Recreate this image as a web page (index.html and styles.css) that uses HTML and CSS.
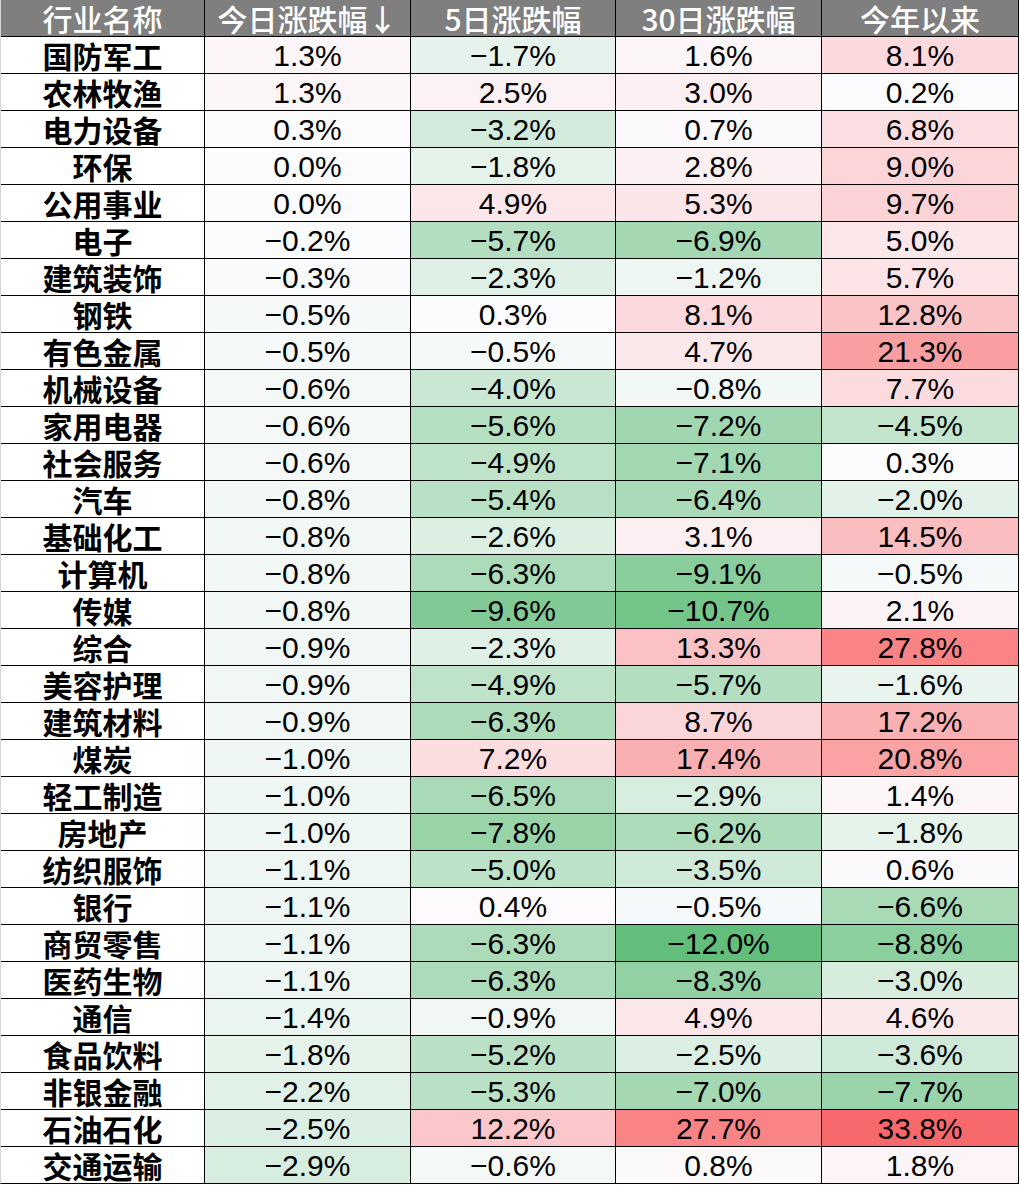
FILE: index.html
```html
<!DOCTYPE html>
<html lang="zh">
<head>
<meta charset="utf-8">
<title>行业涨跌幅</title>
<link rel="stylesheet" href="styles.css">
</head>
<body>
<div class="sheet">
  <div class="hd">行业名称</div><div class="hd">今日涨跌幅↓</div><div class="hd">5日涨跌幅</div><div class="hd">30日涨跌幅</div><div class="hd">今年以来</div>
  <div class="name">国防军工</div><div class="num">1.3%</div><div class="num">−1.7%</div><div class="num">1.6%</div><div class="num">8.1%</div>
  <div class="name">农林牧渔</div><div class="num">1.3%</div><div class="num">2.5%</div><div class="num">3.0%</div><div class="num">0.2%</div>
  <div class="name">电力设备</div><div class="num">0.3%</div><div class="num">−3.2%</div><div class="num">0.7%</div><div class="num">6.8%</div>
  <div class="name">环保</div><div class="num">0.0%</div><div class="num">−1.8%</div><div class="num">2.8%</div><div class="num">9.0%</div>
  <div class="name">公用事业</div><div class="num">0.0%</div><div class="num">4.9%</div><div class="num">5.3%</div><div class="num">9.7%</div>
  <div class="name">电子</div><div class="num">−0.2%</div><div class="num">−5.7%</div><div class="num">−6.9%</div><div class="num">5.0%</div>
  <div class="name">建筑装饰</div><div class="num">−0.3%</div><div class="num">−2.3%</div><div class="num">−1.2%</div><div class="num">5.7%</div>
  <div class="name">钢铁</div><div class="num">−0.5%</div><div class="num">0.3%</div><div class="num">8.1%</div><div class="num">12.8%</div>
  <div class="name">有色金属</div><div class="num">−0.5%</div><div class="num">−0.5%</div><div class="num">4.7%</div><div class="num">21.3%</div>
  <div class="name">机械设备</div><div class="num">−0.6%</div><div class="num">−4.0%</div><div class="num">−0.8%</div><div class="num">7.7%</div>
  <div class="name">家用电器</div><div class="num">−0.6%</div><div class="num">−5.6%</div><div class="num">−7.2%</div><div class="num">−4.5%</div>
  <div class="name">社会服务</div><div class="num">−0.6%</div><div class="num">−4.9%</div><div class="num">−7.1%</div><div class="num">0.3%</div>
  <div class="name">汽车</div><div class="num">−0.8%</div><div class="num">−5.4%</div><div class="num">−6.4%</div><div class="num">−2.0%</div>
  <div class="name">基础化工</div><div class="num">−0.8%</div><div class="num">−2.6%</div><div class="num">3.1%</div><div class="num">14.5%</div>
  <div class="name">计算机</div><div class="num">−0.8%</div><div class="num">−6.3%</div><div class="num">−9.1%</div><div class="num">−0.5%</div>
  <div class="name">传媒</div><div class="num">−0.8%</div><div class="num">−9.6%</div><div class="num">−10.7%</div><div class="num">2.1%</div>
  <div class="name">综合</div><div class="num">−0.9%</div><div class="num">−2.3%</div><div class="num">13.3%</div><div class="num">27.8%</div>
  <div class="name">美容护理</div><div class="num">−0.9%</div><div class="num">−4.9%</div><div class="num">−5.7%</div><div class="num">−1.6%</div>
  <div class="name">建筑材料</div><div class="num">−0.9%</div><div class="num">−6.3%</div><div class="num">8.7%</div><div class="num">17.2%</div>
  <div class="name">煤炭</div><div class="num">−1.0%</div><div class="num">7.2%</div><div class="num">17.4%</div><div class="num">20.8%</div>
  <div class="name">轻工制造</div><div class="num">−1.0%</div><div class="num">−6.5%</div><div class="num">−2.9%</div><div class="num">1.4%</div>
  <div class="name">房地产</div><div class="num">−1.0%</div><div class="num">−7.8%</div><div class="num">−6.2%</div><div class="num">−1.8%</div>
  <div class="name">纺织服饰</div><div class="num">−1.1%</div><div class="num">−5.0%</div><div class="num">−3.5%</div><div class="num">0.6%</div>
  <div class="name">银行</div><div class="num">−1.1%</div><div class="num">0.4%</div><div class="num">−0.5%</div><div class="num">−6.6%</div>
  <div class="name">商贸零售</div><div class="num">−1.1%</div><div class="num">−6.3%</div><div class="num">−12.0%</div><div class="num">−8.8%</div>
  <div class="name">医药生物</div><div class="num">−1.1%</div><div class="num">−6.3%</div><div class="num">−8.3%</div><div class="num">−3.0%</div>
  <div class="name">通信</div><div class="num">−1.4%</div><div class="num">−0.9%</div><div class="num">4.9%</div><div class="num">4.6%</div>
  <div class="name">食品饮料</div><div class="num">−1.8%</div><div class="num">−5.2%</div><div class="num">−2.5%</div><div class="num">−3.6%</div>
  <div class="name">非银金融</div><div class="num">−2.2%</div><div class="num">−5.3%</div><div class="num">−7.0%</div><div class="num">−7.7%</div>
  <div class="name">石油石化</div><div class="num">−2.5%</div><div class="num">12.2%</div><div class="num">27.7%</div><div class="num">33.8%</div>
  <div class="name">交通运输</div><div class="num">−2.9%</div><div class="num">−0.6%</div><div class="num">0.8%</div><div class="num">1.8%</div>
</div>
<script src="script.js"></script>
</body>
</html>
```

FILE: styles.css
```css
html, body {
  margin: 0;
  padding: 0;
  background: #ffffff;
}
.sheet {
  display: grid;
  grid-template-columns: 203px 205px 204px 205px 196px;
  grid-auto-rows: 36px;
  gap: 1px;
  background: #000000;
  width: 1017px;
  border-left: 1px solid #d4d4d4;
  border-right: 1px solid #000;
  border-bottom: 1px solid #000;
}
.hd {
  background: #7f7f7f;
  color: #ffffff;
  font-family: "Noto Sans CJK SC", "Liberation Sans", sans-serif;
  font-size: 30px;
  font-weight: 500;
  line-height: 36px;
  text-align: center;
  white-space: nowrap;
}
.name {
  background: #ffffff;
  color: #000000;
  font-family: "Noto Sans CJK SC", sans-serif;
  font-weight: 700;
  font-size: 30px;
  line-height: 36px;
  text-align: center;
  white-space: nowrap;
}
.num {
  background: #fcfcff;
  color: #000000;
  font-family: "Liberation Sans", Arial, sans-serif;
  font-size: 30px;
  line-height: 38px;
  text-align: center;
  white-space: nowrap;
}
```

FILE: script.js
```js
(function () {
  var MAX = 33.8, MIN = -12.0;
  var mid = [252, 252, 255], red = [248, 105, 107], green = [99, 190, 123];
  var cells = document.querySelectorAll('.num');
  for (var i = 0; i < cells.length; i++) {
    var v = parseFloat(cells[i].textContent.replace('\u2212', '-'));
    var t, to;
    if (v >= 0) { t = v / MAX; to = red; } else { t = v / MIN; to = green; }
    var c = [];
    for (var k = 0; k < 3; k++) c.push(Math.round(mid[k] + t * (to[k] - mid[k])));
    cells[i].style.backgroundColor = 'rgb(' + c.join(',') + ')';
  }
})();
```
